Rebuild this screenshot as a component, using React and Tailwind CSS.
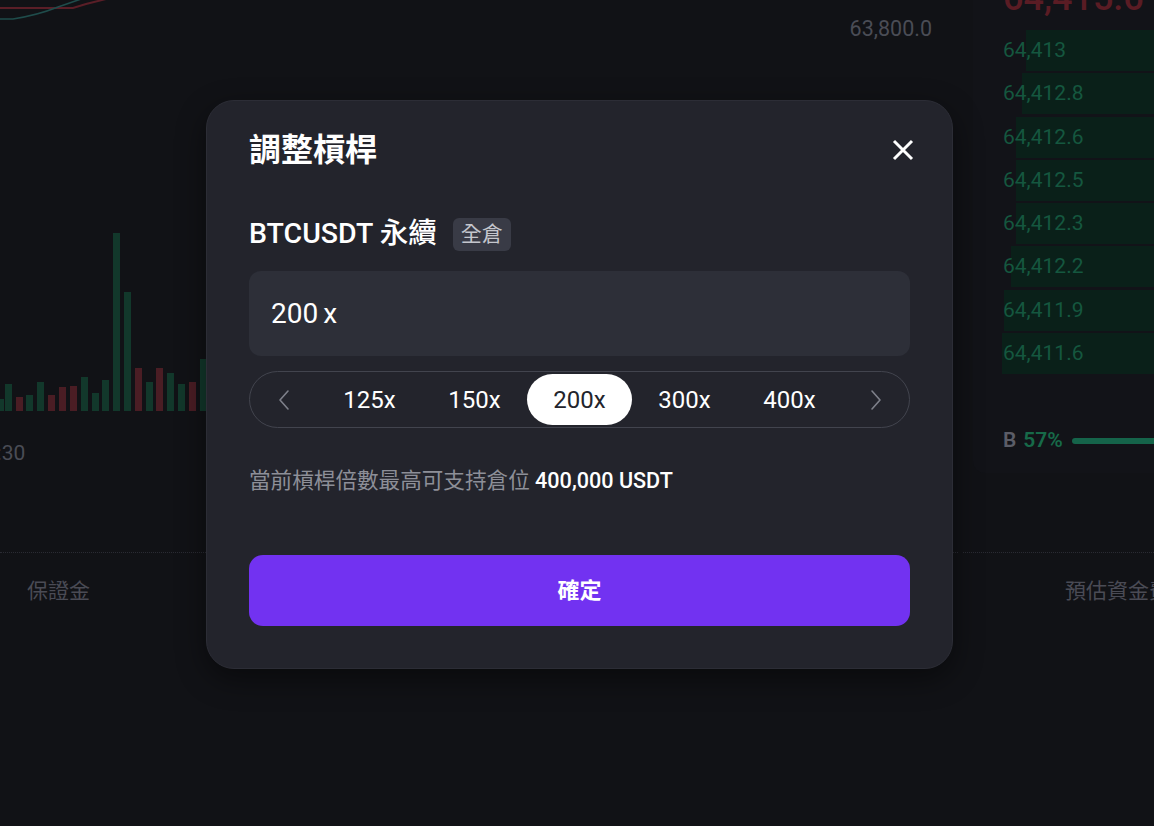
import React from "react";

const FONT = { fontFamily: '"Roboto", "Noto Sans CJK TC", "Noto Sans", sans-serif' };

const bars = [
  [-3, 399, "g"], [5, 384, "g"], [16, 397, "r"], [26, 395, "g"], [37, 382, "g"],
  [48, 395, "r"], [59, 387, "r"], [70, 386, "r"], [81, 377, "g"], [92, 393, "g"],
  [102, 380, "g"], [113, 233, "g"], [124, 292, "g"], [135, 368, "r"], [146, 382, "g"],
  [156, 368, "r"], [167, 373, "g"], [178, 384, "g"], [189, 382, "r"], [200, 359, "g"],
  [211, 370, "g"], [222, 380, "r"],
];

const rows = [
  ["64,413", 128],
  ["64,412.8", 132],
  ["64,412.6", 138],
  ["64,412.5", 138],
  ["64,412.3", 138],
  ["64,412.2", 143],
  ["64,411.9", 150],
  ["64,411.6", 152],
];

const options = ["125x", "150x", "200x", "300x", "400x"];

function Chevron({ dir }) {
  return (
    <svg width="14" height="22" viewBox="0 0 14 22" fill="none">
      <path
        d={dir === "left" ? "M11 2 L3 11 L11 20" : "M3 2 L11 11 L3 20"}
        stroke="#7e808a"
        strokeWidth="1.6"
        strokeLinecap="round"
        strokeLinejoin="round"
      />
    </svg>
  );
}

export default function App() {
  return (
    <div
      className="relative w-[1154px] h-[826px] overflow-hidden bg-[#111216]"
      style={FONT}
    >
      {/* Background page */}
      <div className="flex flex-col h-full">
        <div className="flex h-[553px]">
          {/* Chart column */}
          <div className="w-[958px] shrink-0 h-[553px] flex flex-col border-b border-dotted border-[#2a2b33]">
            <div className="flex justify-between items-start">
              <svg width="120" height="24" viewBox="0 0 120 24" className="block">
                <path d="M0 8 L73 8 L86 4 L110 -2" stroke="#5a1e27" strokeWidth="2" fill="none" />
                <path d="M0 19 L13 19 Q38 15 58 7 L84 -2" stroke="#1f4c4b" strokeWidth="1.6" fill="none" />
              </svg>
              <div className="mt-[17px] mr-[26px] text-[21.5px] leading-[24px] text-[#4a4c55]">
                63,800.0
              </div>
            </div>
            <svg width="958" height="191" viewBox="0 220 958 191" className="block mt-[179px]">
              {bars.map(([x, top, c], i) => (
                <rect
                  key={i}
                  x={x}
                  y={top}
                  width="7"
                  height={411 - top}
                  fill={c === "g" ? "#12382b" : "#4a1d24"}
                />
              ))}
            </svg>
            <div className="mt-[30px] ml-[-27px] text-[21px] leading-[24px] text-[#4a4c55]">
              09:30
            </div>
          </div>

          {/* Order book column */}
          <div className="flex-1 min-w-0 overflow-hidden h-[553px] ml-[5px] border-b border-dotted border-[#2a2b33]">
            <div className="ml-[10px] h-[473px] rounded-bl-[12px] bg-[#121318] overflow-hidden pl-[30px] flex flex-col">
              <div className="mt-[-20px] text-[36px] leading-none font-medium text-[#5a1c24] whitespace-nowrap">
                64,415.6 ↓
              </div>
              <div className="mt-[14px] flex flex-col gap-[2.25px]">
                {rows.map(([p, w]) => (
                  <div key={p} className="relative h-[41px] flex items-center">
                    <div
                      className="absolute top-0 bottom-0 right-0 bg-[#0a2019]"
                      style={{ width: `${w}px` }}
                    />
                    <span className="relative text-[21px] leading-none text-[#15573f]">{p}</span>
                  </div>
                ))}
              </div>
              <div className="mt-[55px] h-[24px] flex items-center whitespace-nowrap">
                <span className="text-[21px] font-semibold text-[#5b5d67]">B</span>
                <span className="ml-[7px] text-[21px] font-semibold text-[#176a49]">57%</span>
                <div className="ml-[9px] w-[200px] shrink-0 h-[6px] rounded-full bg-[#15644a]" />
              </div>
            </div>
          </div>
        </div>

        {/* Bottom tabs */}
        <div className="flex items-start mt-[23px]">
          <div className="pl-[27px] text-[21px] leading-[30px] text-[#4a4b55]">保證金</div>
          <div className="ml-auto w-[89px] overflow-hidden whitespace-nowrap text-[21px] leading-[30px] text-[#4a4b55]">
            預估資金費率
          </div>
        </div>
      </div>

      {/* Modal */}
      <div className="absolute left-[206px] top-[100px] w-[747px] h-[569px] rounded-[28px] bg-[#23242c] border border-[#2c2d36] shadow-[0_10px_30px_rgba(0,0,0,0.45)] px-[42px] pt-[29px] flex flex-col">
        <div className="flex items-center justify-between h-[40px]">
          <div className="text-[32px] leading-[40px] font-semibold text-white">調整槓桿</div>
          <svg width="24" height="24" viewBox="0 0 24 24" className="-mr-[5px]" fill="none">
            <path d="M3 3 L21 21 M21 3 L3 21" stroke="#ffffff" strokeWidth="3" strokeLinecap="butt" />
          </svg>
        </div>

        <div className="mt-[48px] h-[33px] flex items-center">
          <span className="text-[28.5px] leading-none font-medium text-white">BTCUSDT 永續</span>
          <span className="ml-[16px] h-[33px] px-[8px] rounded-[6px] bg-[#393b46] text-[21px] leading-[33px] text-[#c4c6cd]">
            全倉
          </span>
        </div>

        <div className="mt-[20px] h-[85px] rounded-[12px] bg-[#2d2f38] flex items-center pl-[22px]">
          <span className="text-[28px] leading-none text-white">200</span>
          <span className="ml-[5px] text-[28px] leading-none text-white">x</span>
        </div>

        <div className="mt-[15px] h-[57px] rounded-full border border-[#42444e] flex items-center">
          <div className="w-[67px] flex justify-center">
            <Chevron dir="left" />
          </div>
          {options.map((o) => (
            <div key={o} className="w-[105px] h-[51px] flex items-center justify-center">
              {o === "200x" ? (
                <div className="w-[105px] h-[51px] rounded-full bg-white flex items-center justify-center text-[24px] text-[#23242c]">
                  {o}
                </div>
              ) : (
                <span className="text-[24px] text-white">{o}</span>
              )}
            </div>
          ))}
          <div className="flex-1 flex justify-center">
            <Chevron dir="right" />
          </div>
        </div>

        <div className="mt-[38px] text-[21.6px] leading-[30px] text-[#8d8f98] whitespace-nowrap">
          當前槓桿倍數最高可支持倉位 <span className="font-medium text-white">400,000 USDT</span>
        </div>

        <div className="mt-[59px] h-[71px] rounded-[14px] bg-[#7232f1] flex items-center justify-center">
          <span className="text-[22px] font-bold text-white">確定</span>
        </div>
      </div>
    </div>
  );
}
